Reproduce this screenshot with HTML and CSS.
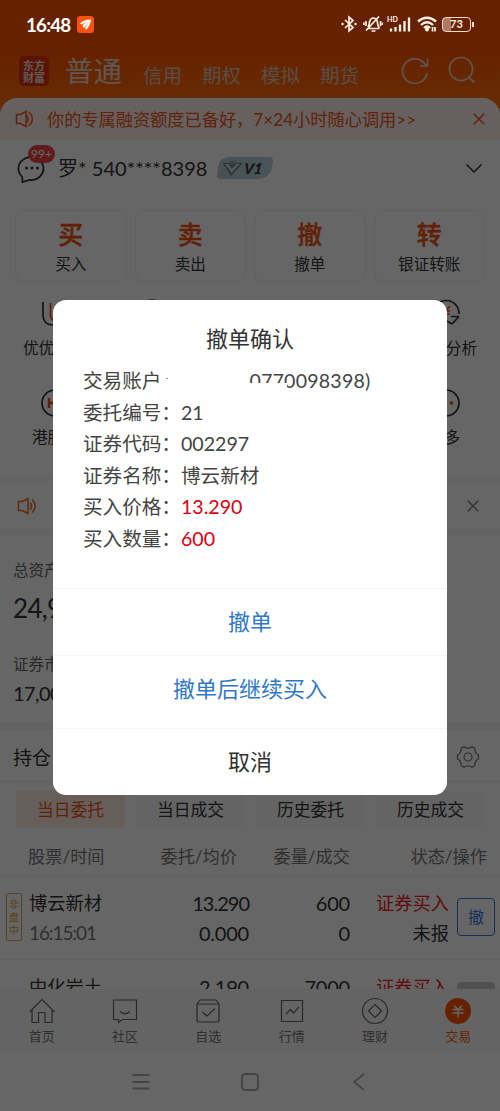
FILE: index.html
```html
<!DOCTYPE html>
<html lang="zh-CN">
<head>
<meta charset="utf-8">
<title>交易</title>
<link rel="stylesheet" href="styles.css">
</head>
<body>
<div class="phone">
  <div class="page">
    <header class="top">
      <div class="logo"><span>东方</span><span>财富</span></div>
      <nav class="modes"><b>普通</b><span>信用</span><span>期权</span><span>模拟</span><span>期货</span></nav>
      <svg class="refresh" width="30" height="30" viewBox="0 0 30 30"><path d="M27 17A12.3 12.3 0 1 1 24.5 7.500L27 10M27.500 2.500v7.500h-7.500"/></svg>
      <svg class="search" width="30" height="30" viewBox="0 0 30 30"><circle cx="14" cy="13" r="11.500"/><path d="M22 21.500l5.500 5"/></svg>
    </header>
    <main class="sheet">
      <div class="promo">
        <svg width="20" height="18" viewBox="0 0 20 18"><path d="M1.500 4.500h4L11 1.500v15L5.500 13.500h-4zM11 5c3 1.500 3 6.500 0 8M13.500 2c5 3.500 5 10.500 0 14"/></svg>
        <p>你的专属融资额度已备好，7×24小时随心调用&gt;&gt;</p>
        <svg class="x" width="12" height="12" viewBox="0 0 12 12"><path d="M.8.8l10.400 10.400M11.200.8L.8 11.200"/></svg>
      </div>
      <div class="user">
        <div class="chat">
          <svg width="30" height="30" viewBox="0 0 30 30"><path d="M5.500 28l-.3-5.200A12.500 11.500 0 1 1 12.500 26z"/><g class="dots"><circle cx="9.500" cy="14" r="1.500"/><circle cx="15" cy="14" r="1.500"/><circle cx="20.500" cy="14" r="1.500"/></g></svg>
          <i>99+</i>
        </div>
        <span class="name">罗* 540****8398</span>
        <div class="vip"><svg width="20" height="17" viewBox="0 0 20 17"><path class="a" d="M0 3h20L10 16z"/><path class="b" d="M3 4l7 9 7-9-3 0-4 5-4-5z"/><path class="c" d="M6 1h8l-4 5z"/></svg><b>V1</b></div>
        <svg class="down" width="18" height="11" viewBox="0 0 18 11"><path d="M1.500 1.500L9 9l7.500-7.500"/></svg>
      </div>
      <div class="cards">
        <div><b>买</b><span>买入</span></div>
        <div><b>卖</b><span>卖出</span></div>
        <div><b>撤</b><span>撤单</span></div>
        <div><b>转</b><span>银证转账</span></div>
      </div>
      <div class="tools">
        <div class="tool">
          <svg width="28" height="28" viewBox="0 0 28 28"><path d="M2 3v13c0 6 3 10 10 10"/><path class="o" d="M9.500 4v12c0 3 1 5 4 6"/></svg>
          <span>优优</span>
        </div>
        <div class="tool second"><svg width="28" height="28" viewBox="0 0 28 28"><circle cx="14" cy="14" r="13"/></svg></div>
        <div class="tool end">
          <svg width="28" height="28" viewBox="0 0 28 28"><path d="M1 14A13 13 0 0 1 27 15M27 17.500h-8M27 17.500L20 25M20 25l-5-3"/><path class="o" d="M9 7l4.500 5L18 7M9 12h9M9 15h9M13.500 12v8"/></svg>
          <span>分析</span>
        </div>
      </div>
      <div class="tools row2">
        <div class="tool hk">
          <svg width="28" height="28" viewBox="0 0 28 28"><circle cx="14" cy="14" r="13"/><path class="o h" d="M8 9v10M8 14h10M18 9v10"/></svg>
          <span>港股</span>
        </div>
        <div class="tool end more">
          <svg width="28" height="28" viewBox="0 0 28 28"><circle cx="14" cy="14" r="13"/><circle class="dot" cx="19.500" cy="14" r="1.800"/></svg>
          <span>多</span>
        </div>
      </div>
      <div class="notice">
        <svg width="20" height="18" viewBox="0 0 20 18"><path d="M1.500 4.500h4L11 1.500v15L5.500 13.500h-4zM13 5.500c2 2 2 5 0 7M15 2.500c4 3.500 4 9.500 0 13"/></svg>
        <svg class="x" width="12" height="12" viewBox="0 0 12 12"><path d="M.8.8l10.400 10.400M11.200.8L.8 11.200"/></svg>
      </div>
      <div class="assets">
        <span class="cap">总资产</span>
        <span class="total">24,9</span>
        <span class="cap">证券市</span>
        <span class="value">17,00</span>
      </div>
      <div class="hold">
        <span>持仓</span>
        <svg width="24" height="24" viewBox="0 0 24 24"><path d="M8 1.700Q12 4.500 16 1.700l2.800 1.600Q18.500 8 22.500 10.300v3.400Q18.500 16 18.800 20.700L16 22.300Q12 19.500 8 22.300l-2.800-1.600Q5.500 16 1.500 13.700v-3.400Q5.500 8 5.200 3.300z"/><circle cx="12" cy="12" r="4"/></svg>
      </div>
      <div class="tabs"><span class="on">当日委托</span><span>当日成交</span><span>历史委托</span><span>历史成交</span></div>
      <div class="cols"><span>股票/时间</span><span>委托/均价</span><span>委量/成交</span><span>状态/操作</span></div>
      <div class="order">
        <div class="tag"><span>非</span><span>盘</span><span>中</span></div>
        <div class="c1"><span>博云新材</span><span class="time">16:15:01</span></div>
        <div class="c2"><span class="price">13.290</span><span>0.000</span></div>
        <div class="c3"><span>600</span><span>0</span></div>
        <div class="c4"><span class="buy">证券买入</span><span>未报</span></div>
        <div class="undo">撤</div>
      </div>
      <div class="order last">
        <div class="tag none"></div>
        <div class="c1"><span>中化岩土</span></div>
        <div class="c2"><span>2.190</span></div>
        <div class="c3"><span>7000</span></div>
        <div class="c4"><span class="buy">证券买入</span></div>
        <div class="undo off"></div>
      </div>
    </main>
    <footer class="bar">
      <div><svg width="28" height="28" viewBox="0 0 28 28"><path d="M1.500 15L14 2.500 26.500 15M4 13v12.500h6.500v-10h6.500v10h7V13"/></svg>首页</div>
      <div><svg width="28" height="28" viewBox="0 0 28 28"><path d="M2.500 3h23v19.500h-14l-4 3v-3h-5zM9 14.500q5 4.500 10 0"/></svg>社区</div>
      <div><svg width="28" height="28" viewBox="0 0 28 28"><path d="M3 7l3-4h16l3 4v17l-1 1H4l-1-1zM3 7h22M8.500 15l4.500 4 8-7.500"/></svg>自选</div>
      <div><svg width="28" height="28" viewBox="0 0 28 28"><path d="M3.500 3.500h21v21h-21zM8 17l4.500-4.500 3 3.500L21 10"/></svg>行情</div>
      <div><svg width="28" height="28" viewBox="0 0 28 28"><circle cx="14" cy="14" r="12.500"/><path d="M14 7.500l6.500 6.500-6.500 6.500L7.500 14z"/></svg>理财</div>
      <div class="on"><svg width="28" height="28" viewBox="0 0 28 28"><circle cx="14" cy="14" r="13"/><path d="M10 8.500l4 4 4-4M8.500 12.500h11M8.500 16h11M14 12.500v8"/></svg>交易</div>
    </footer>
    <div class="keys">
      <svg width="18" height="18" viewBox="0 0 18 18"><path d="M.5 2h17M.5 9h17M.5 15.500h17"/></svg>
      <svg width="18" height="18" viewBox="0 0 18 18"><rect x="1" y="1" width="16" height="16" rx="3"/></svg>
      <svg width="18" height="18" viewBox="0 0 18 18"><path d="M14 1L4 9l10 8"/></svg>
    </div>
  </div>
  <div class="scrim"></div>
  <div class="status">
    <span class="clock">16:48</span>
    <svg width="17" height="17" viewBox="0 0 17 17"><rect class="app" width="17" height="17" rx="3.500"/><path class="wing" d="M2.800 7.500Q8 3 14 3.500 13.500 9.500 9 14l-1-2.500 3.500-5-5 5.500-1-2.500 4-4-4.500 3z"/></svg>
    <div class="signals">
      <svg width="16" height="18" viewBox="0 0 16 18"><path d="M4 5l8 7.500L8 16V2l4 3.500L4 13"/><circle class="f" cx="1.500" cy="9" r="1.200"/><circle class="f" cx="14.500" cy="9" r="1.200"/></svg>
      <svg width="20" height="18" viewBox="0 0 20 18"><path d="M4.500 13.500h12M5 12q1.500-2 1.500-5 1-4 4-4 4 1 4 5 0 3 2 5M3 15.500L16 1.500M3 6v5M1 7.500v2.500M17.500 6v5M19.500 7.500v2.500M8.500 16h4"/></svg>
      <div class="cell"><em>HD</em><svg width="23" height="16" viewBox="0 0 23 16"><path class="w" d="M3 15.500v-3M7.500 15.500V11M12 15.500V8.500M16.500 15.500V5M21 15.500V1.500"/></svg></div>
      <svg width="20" height="16" viewBox="0 0 20 16"><path class="w" d="M1 5.500Q10-2 19 5.500M4 9Q10 3.500 16 9"/><path class="w" d="M7 12q3-3 6 0"/><circle class="f" cx="10" cy="13.500" r="2"/><path d="M15.500 11v4.500M18 11v4.500"/></svg>
      <div class="batt"><span>73</span></div>
    </div>
  </div>
  <section class="dialog">
    <h2>撤单确认</h2>
    <dl>
      <div class="acct"><dt>交易账户</dt><dd>0770098398)</dd></div>
      <div><dt>委托编号：</dt><dd>21</dd></div>
      <div><dt>证券代码：</dt><dd>002297</dd></div>
      <div><dt>证券名称：</dt><dd>博云新材</dd></div>
      <div><dt>买入价格：</dt><dd class="red">13.290</dd></div>
      <div><dt>买入数量：</dt><dd class="red">600</dd></div>
    </dl>
    <button class="b1">撤单</button>
    <button class="b2">撤单后继续买入</button>
    <button class="b3">取消</button>
  </section>
</div>
</body>
</html>
```
FILE: styles.css
```css
* { box-sizing: border-box; margin: 0; padding: 0; }
body { font-family: Lato, "Noto Sans CJK SC", sans-serif; color: #333; }
svg { display: block; flex: none; fill: none; stroke: currentColor; stroke-width: 1.5; }
.phone { position: relative; width: 500px; height: 1111px; overflow: hidden; }
.page { display: flex; flex-direction: column; height: 1111px; background: linear-gradient(#ff5500 0 50px, #ff7a14 130px); }
.scrim { position: absolute; inset: 0; background: rgba(0, 0, 0, .6); }

/* header */
.top { display: flex; height: 98px; padding: 44px 23px 0 19px; align-items: center; color: #fff; flex: none; }
.logo { width: 30px; height: 30px; border-radius: 5px; background: #e0300f; display: flex; flex-direction: column; align-items: center; justify-content: center; font: 700 11px/12px "Noto Sans CJK SC", sans-serif; color: #f0e0d8; }
.modes { display: flex; align-items: flex-end; flex: 1; gap: 20px; padding-left: 16px; font-size: 19.500px; line-height: 26px; color: #dfc2ae; }
.modes b { font-weight: 400; font-size: 28.500px; line-height: 36px; color: #efd6c6; margin-right: 1px; }
.refresh, .search { color: #f0d2c0; stroke-width: 1.700; }
.refresh { margin-right: 17px; }

/* sheet */
.sheet { flex: none; height: 891px; overflow: hidden; background: #fff; border-radius: 18px 18px 0 0; }
.promo { display: flex; align-items: center; height: 42px; padding: 0 15px; background: #fff0eb; color: #f0561a; }
.promo p { flex: 1; margin: -2px 0 0 12px; font-size: 17.200px; white-space: nowrap; }
.user { display: flex; align-items: center; height: 56px; padding: 0 17px; }
.chat { position: relative; margin-top: 1px; }
.chat svg { stroke-width: 1.800; }
.dots { fill: currentColor; stroke: none; }
.chat i { position: absolute; left: 11px; top: -9px; width: 27px; height: 18px; border-radius: 9px; background: #f24343; color: #fff; font: 12px/18px Lato, sans-serif; text-align: center; }
.name { margin: -2px 0 0 11px; font-size: 20.100px; width: 160px; white-space: nowrap; }
.vip { display: flex; align-items: center; width: 54px; height: 22px; padding-left: 4px; background: linear-gradient(90deg, #b5ccd2, #b5d4df); border-radius: 9px 4px 12px 4px; transform: skewX(-8deg); }
.vip b { font: italic 900 15px Lato, sans-serif; margin-left: 2px; }
.vip svg { stroke: none; }
.vip .a { fill: #71848d; }
.vip .b { fill: #d7e5e9; }
.vip .c { fill: #93a8b2; }
.down { margin-left: auto; }

.cards { display: grid; grid-template-columns: repeat(4, 1fr); gap: 8px; padding: 14px 15px 0; }
.cards div { display: flex; flex-direction: column; align-items: center; height: 72px; padding-top: 6px; border: 1px solid #f0f0f0; border-radius: 9px; }
.cards b { font: 500 25px/32px "Noto Sans CJK SC", sans-serif; -webkit-text-stroke: .4px #f0520f; color: #f0520f; }
.cards span { margin-top: 3px; font-size: 15.600px; line-height: 24px; }

.tools { display: flex; padding: 17px 23px 0; height: 91px; }
.tool { display: flex; flex-direction: column; width: 66px; font-size: 15.600px; line-height: 22px; gap: 10px; }
.tool svg { margin-left: 18px; stroke-width: 1.700; }
.o { stroke: #f0520f; }
.tool.second { margin-left: 31px; }
.tool.end { margin-left: auto; align-items: flex-end; }
.tool.end svg { margin-right: 17px; }
.row2 { height: 94px; padding-top: 16px; }
.row2 .tool { gap: 9px; }
.h { stroke-width: 2.500; }
.dot { fill: #f0520f; stroke: none; }
.hk span { margin-left: 9px; }
.more span { margin-right: 17px; }

.notice { display: flex; align-items: center; justify-content: space-between; height: 59px; margin-top: 9px; padding: 1px 21px 0 17px; border-top: 6px solid #fbfbfb; border-bottom: 6px solid #f8f8f8; color: #ef6a22; }
.notice .x { color: #888; }
.assets { display: flex; flex-direction: column; height: 187px; padding: 23px 13px 0; }
.cap { font-size: 15.600px; line-height: 24px; color: #666; }
.total { font-size: 26px; line-height: 32px; margin: 10px 0 28px; letter-spacing: -.7px; }
.value { font-size: 20px; line-height: 26px; margin-top: 4px; letter-spacing: -.6px; }
.hold { display: flex; align-items: center; justify-content: space-between; height: 60px; padding: 2px 20px 0 13px; border-top: 8px solid #f5f5f5; border-bottom: 1px solid #f0f0f0; font-size: 19px; }
.hold svg { color: #777; stroke-width: 1.200; }
.tabs { display: grid; grid-template-columns: repeat(4, 1fr); gap: 11px; padding: 9px 15px 0 16px; font-size: 16.800px; line-height: 37px; text-align: center; }
.tabs span { background: #fafafa; border-radius: 3px; }
.tabs .on { background: #ffebe2; color: #f0520f; }
.cols { display: grid; grid-template-columns: 74px 135px 113px 137px; height: 48px; padding: 10px 0 0 28px; border-bottom: 1px solid #f2f2f2; font-size: 17.200px; line-height: 37px; color: #777; text-align: right; white-space: nowrap; }

.order { display: flex; height: 84px; padding-top: 12px; border-bottom: 1px solid #f2f2f2; font-size: 18.300px; line-height: 30px; }
.order > div { display: flex; flex-direction: column; }
.order .tag { width: 16px; height: 48px; margin: 5px 7px 0 6px; border: 1px solid #dca95a; border-radius: 2px; color: #e6a23c; font-size: 10px; line-height: 13px; align-items: center; justify-content: center; }
.order .none { border: 0; }
.c1 { width: 100px; }
.c1 .time { color: #777; font-size: 19px; letter-spacing: -1.100px; }
.c2 { width: 120px; }
.c3 { width: 101px; }
.c4 { width: 99px; }
.c2, .c3, .c4 { text-align: right; }
.c2, .c3 { font-size: 20px; letter-spacing: -.2px; }
.c2 .price { letter-spacing: -1px; }
.buy { color: #ef2020; }
.order .undo { width: 38px; height: 38px; margin: 10px 0 0 8px; border: 1.500px solid #2f7be0; border-radius: 4px; color: #2f7be0; font-size: 16px; align-items: center; justify-content: center; }
.order .off { border: 0; background: #c8c8c8; }

/* bottom bars */
.bar { display: grid; grid-template-columns: repeat(6, 1fr); height: 64px; padding-top: 8px; background: #fafafa; color: #777; font-size: 13px; line-height: 20px; flex: none; }
.bar div { display: flex; flex-direction: column; align-items: center; gap: 1px; }
.bar svg { stroke-width: 1.200; color: #666; }
.bar .on { color: #ff5500; }
.bar .on circle { fill: #ff5500; stroke: none; }
.bar .on path { stroke: #fff; stroke-width: 1.500; }
.keys { display: flex; justify-content: center; gap: 91px; height: 58px; padding-top: 20px; background: #fff; color: #aaa; flex: none; }
.keys svg { stroke-width: 1.800; }

/* system status */
.status { position: absolute; left: 0; right: 0; top: 0; height: 48px; display: flex; align-items: center; padding: 0 29px 0 26px; color: #fff0e8; }
.clock { font: 700 18.800px Lato, sans-serif; color: #fff; width: 51px; letter-spacing: -.8px; }
.app { fill: #ff5310; stroke: none; }
.wing { fill: #fff; stroke: none; }
.signals { display: flex; margin-left: auto; align-items: center; gap: 5.500px; }
.signals svg { stroke-width: 1.700; }
.signals .w { stroke-width: 2.300; }
.f { fill: currentColor; stroke: none; }
.cell { position: relative; }
.cell em { position: absolute; left: -1px; top: -1px; font: 700 7px/8px Lato, sans-serif; }
.batt { position: relative; width: 29px; height: 15px; border: 1.500px solid #f6d8cc; border-radius: 4px; background: linear-gradient(90deg, #b07a62 30%, transparent 30%); font: 700 11px/12px Lato, sans-serif; text-align: center; }
.batt::after { content: ""; position: absolute; right: -4px; top: 4px; width: 2px; height: 5px; background: #f6d8cc; }

/* confirm dialog */
.dialog { position: absolute; left: 53px; top: 300px; width: 394px; height: 495px; border-radius: 13px; background: #fff; color: #444; display: flex; flex-direction: column; }
.dialog h2 { padding-top: 24px; font-size: 22px; line-height: 30px; font-weight: 400; text-align: center; height: 65px; color: #333; }
.dialog dl { height: 223px; padding-left: 30px; font-size: 19.600px; line-height: 31.500px; }
.dialog dl div { display: flex; }
.dialog .acct { position: relative; }
.dialog .acct dd { margin-left: 88px; letter-spacing: .2px; }
.acct::before { content: ""; position: absolute; left: 83px; top: 13px; width: 2px; height: 1px; background: #999; }
.acct::after { content: ""; position: absolute; left: 164px; top: 18px; width: 40px; height: 13px; background: #fff; }
.dialog .red { color: #d8000f; }
.dialog button { border: 0; border-top: 1px solid #f4f4f4; background: none; font: 22px/30px Lato, "Noto Sans CJK SC", sans-serif; color: #2f78c8; }
.b1 { height: 67px; }
.b2 { height: 73px; padding-bottom: 6px; }
.dialog .b3 { flex: 1; color: #333; padding-bottom: 1px; }
```
